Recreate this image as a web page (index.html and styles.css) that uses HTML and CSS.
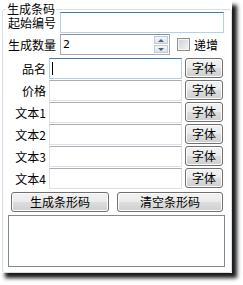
FILE: index.html
```html
<!DOCTYPE html>
<html lang="zh">
<head>
    <meta charset="UTF-8">
    <title>生成条码</title>
    <link rel="stylesheet" href="styles.css">
</head>
<body>
    <div class="window">
        <fieldset class="group">
            <legend>生成条码</legend>

            <div class="row first">
                <label class="lbl wide">起始编号</label>
                <div class="field hot long"></div>
            </div>
            <div class="row second">
                <label class="lbl wide">生成数量</label>
                <div class="field spin">
                    <span class="val">2</span>
                    <span class="arrows"><i class="up"></i><i class="down"></i></span>
                </div>
                <span class="check"></span>
                <span class="check-text">递增</span>
            </div>

            <div class="list">
                <div class="row">
                    <label class="lbl">品名</label>
                    <div class="field hot"><span class="caret"></span></div>
                    <button class="btn small">字体</button>
                </div>
                <div class="row">
                    <label class="lbl">价格</label>
                    <div class="field"></div>
                    <button class="btn small">字体</button>
                </div>
                <div class="row">
                    <label class="lbl">文本1</label>
                    <div class="field"></div>
                    <button class="btn small">字体</button>
                </div>
                <div class="row">
                    <label class="lbl">文本2</label>
                    <div class="field"></div>
                    <button class="btn small">字体</button>
                </div>
                <div class="row">
                    <label class="lbl">文本3</label>
                    <div class="field"></div>
                    <button class="btn small">字体</button>
                </div>
                <div class="row">
                    <label class="lbl">文本4</label>
                    <div class="field"></div>
                    <button class="btn small">字体</button>
                </div>
            </div>

            <div class="actions">
                <button class="btn make">生成条形码</button>
                <button class="btn clear">清空条形码</button>
            </div>

            <div class="output"></div>
        </fieldset>
    </div>
</body>
</html>
```

FILE: styles.css
```css
body {
    margin: 0;
    width: 243px;
    height: 285px;
    background-color: #fff;
    font-family: "Noto Sans CJK SC", "DejaVu Sans", sans-serif;
    font-size: 12px;
    color: #000;
}

.window {
    width: 232px;
    height: 273px;
    box-sizing: border-box;
    padding: 3px 0 0 2px;
    background-color: #fff;
    box-shadow: 5px 5px 4px rgba(0, 0, 0, 0.9);
}

.group {
    box-sizing: border-box;
    width: 230px;
    height: 270px;
    margin: 0;
    padding: 0 0 0 5px;
    border: 1px solid #d5dfe5;
    border-radius: 3px;
}

.group legend {
    margin-left: -2px;
    padding: 0 1px;
    line-height: 12px;
}

.row {
    display: flex;
    align-items: center;
    height: 21px;
}

.row.first {
    margin-top: -3px;
}

.row.second {
    margin-top: 1px;
}

.lbl {
    box-sizing: border-box;
    width: 41px;
    padding-right: 3px;
    text-align: right;
    line-height: 14px;
}

.lbl.wide {
    width: 52px;
    padding-right: 0;
    text-align: left;
}

.field {
    box-sizing: border-box;
    position: relative;
    width: 133px;
    height: 21px;
    border: 1px solid #dbdfe6;
    border-top-color: #abadb3;
    background-color: #fff;
}

.field.long {
    width: 164px;
}

.field.hot {
    border-color: #b5cfe7;
    border-top-color: #3d7bad;
}

.caret {
    position: absolute;
    left: 2px;
    top: 3px;
    width: 1px;
    height: 13px;
    background-color: #000;
}

.field.spin {
    display: flex;
    align-items: center;
    justify-content: space-between;
    width: 110px;
    border-color: #a5acb5;
    border-top-color: #8e8f8f;
}

.val {
    padding-left: 2px;
    font-family: "DejaVu Sans", sans-serif;
    font-size: 11px;
}

.arrows {
    display: flex;
    flex-direction: column;
    gap: 1px;
    margin-right: 1px;
}

.arrows i {
    display: flex;
    align-items: center;
    justify-content: center;
    box-sizing: border-box;
    width: 14px;
    height: 8px;
    border: 1px solid #c3cad4;
    background: linear-gradient(#f4f6f9, #dde3ec);
}

.arrows i::after {
    content: "";
    border-left: 3px solid transparent;
    border-right: 3px solid transparent;
}

.arrows .up::after {
    border-bottom: 3px solid #4d6185;
}

.arrows .down::after {
    border-top: 3px solid #4d6185;
}

.check {
    box-sizing: border-box;
    width: 13px;
    height: 13px;
    margin-left: 7px;
    border: 1px solid #8e8f8f;
    background: linear-gradient(135deg, #cbcfd5, #f6f6f6);
    box-shadow: inset 0 0 0 1px #f4f4f4;
}

.check-text {
    margin-left: 4px;
}

.list {
    display: flex;
    flex-direction: column;
    gap: 1px;
    margin-top: 3px;
}

.btn {
    box-sizing: border-box;
    height: 20px;
    padding: 0;
    border: 1px solid #707070;
    border-radius: 3px;
    background: linear-gradient(#f2f2f2 0%, #ebebeb 50%, #dddddd 51%, #cfcfcf 100%);
    box-shadow: inset 0 0 0 1px #fcfcfc;
    font-family: inherit;
    font-size: 12px;
    line-height: 16px;
    color: #000;
}

.btn.small {
    width: 38px;
    margin-left: 3px;
    align-self: flex-start;
}

.actions {
    display: flex;
    margin-top: 3px;
}

.btn.make {
    width: 98px;
    margin-left: 3px;
}

.btn.clear {
    width: 106px;
    margin-left: 8px;
}

.output {
    box-sizing: border-box;
    width: 217px;
    height: 52px;
    margin-top: 3px;
    border: 1px solid #828790;
    background-color: #fff;
}
```
